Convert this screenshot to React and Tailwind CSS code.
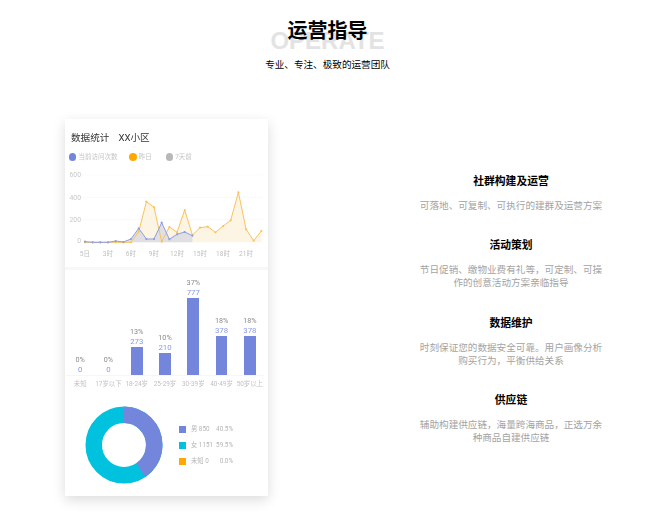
const cjk = "font-['Noto_Sans_CJK_SC','Noto_Sans',sans-serif]";
const chartFont = "font-['Roboto','Noto_Sans_CJK_SC',sans-serif]";

const orangeZ = [382,382,382,382,382,382,382,350,260,277,380,336,352,285,360,338,335,352,333,316,232,343,377,348];
const blueZ = [380,382,382,382,378,381,372,340,372,372,323,373,358,351,362];
const px = (i) => 20 + 7.67 * i;
const py = (z) => z / 3 + 115 - 168;
const line = (arr) => arr.map((z, i) => `${px(i).toFixed(1)},${py(z).toFixed(1)}`).join(' ');
const area = (arr) => `${line(arr)} ${px(arr.length - 1).toFixed(1)},${py(382).toFixed(1)} ${px(0).toFixed(1)},${py(382).toFixed(1)}`;

function LineChart() {
  const yLabels = [['600', 180], ['400', 247], ['200', 314], ['0', 377]];
  const xLabels = [['5日', 0], ['3时', 3], ['6时', 6], ['9时', 9], ['12时', 12], ['15时', 15], ['18时', 18], ['21时', 21]];
  return (
    <svg width="203" height="94" viewBox="0 0 203 94" className="block">
      {[180, 247, 314].map((z) => (
        <line key={z} x1="16" x2="198" y1={py(z)} y2={py(z)} stroke="#f8f8f8" strokeWidth="0.7" />
      ))}
      <polygon points={area(orangeZ)} fill="#fdf5e3" />
      <polygon points={area(blueZ)} fill="#e0e0e2" />
      <polyline points={line(orangeZ)} fill="none" stroke="#fbc25c" strokeWidth="1" />
      <polyline points={line(blueZ)} fill="none" stroke="#8f9de2" strokeWidth="1" />
      {orangeZ.map((z, i) => <circle key={i} cx={px(i)} cy={py(z)} r="1.1" fill="#fbc25c" />)}
      {blueZ.map((z, i) => <circle key={i} cx={px(i)} cy={py(z)} r="1.1" fill="#8f9de2" />)}
      {yLabels.map(([t, z]) => (
        <text key={t} x="16" y={py(z) + 2.4} textAnchor="end" fontSize="6.8" fill="#c8c8c8">{t}</text>
      ))}
      {xLabels.map(([t, i]) => (
        <text key={t} x={px(i)} y="87.5" textAnchor="middle" fontSize="6.6" fill="#c0c0c0">{t}</text>
      ))}
    </svg>
  );
}

const bars = [
  { l: '未知', v: 0, p: '0%', h: 0 },
  { l: '17岁以下', v: 0, p: '0%', h: 0 },
  { l: '18-24岁', v: 273, p: '13%', h: 27.7 },
  { l: '25-29岁', v: 210, p: '10%', h: 22.3 },
  { l: '30-39岁', v: 777, p: '37%', h: 76.7 },
  { l: '40-49岁', v: 378, p: '18%', h: 38.7 },
  { l: '50岁以上', v: 378, p: '18%', h: 38.7 },
];

function Bars() {
  return (
    <div className="ml-px w-[198px]">
      <div className="flex items-end h-[104px] border-b border-[#f6f6f6]">
        {bars.map((b) => (
          <div key={b.l} className="flex-1 flex flex-col items-center">
            <div className="text-[7.2px] leading-[10px] text-[#8a8a8a]">{b.p}</div>
            <div className="text-[7.8px] leading-[10px] text-[#8a9ae6]">{b.v}</div>
            <div className="w-[11.7px] bg-[#7486dc]" style={{ height: b.h }} />
          </div>
        ))}
      </div>
      <div className="flex mt-[3px]">
        {bars.map((b) => (
          <div key={b.l} className="flex-1 text-center whitespace-nowrap text-[6.4px] leading-[10px] text-[#c0c0c0]">{b.l}</div>
        ))}
      </div>
    </div>
  );
}

function Donut() {
  const r = 30.25;
  const c = 2 * Math.PI * r;
  return (
    <svg width="78" height="78" viewBox="0 0 78 78" className="block">
      <circle cx="39" cy="39" r={r} fill="none" stroke="#00c1de" strokeWidth="16.5" />
      <circle
        cx="39" cy="39" r={r} fill="none" stroke="#7486dc" strokeWidth="16.5"
        strokeDasharray={`${0.405 * c} ${c}`} transform="rotate(-90 39 39)"
      />
    </svg>
  );
}

const legend = [
  ['bg-[#7486dc]', '男 850', '40.5%'],
  ['bg-[#00c1de]', '女 1151', '59.5%'],
  ['bg-[#ffa800]', '未知 0', '0.0%'],
];

const features = [
  ['社群构建及运营', ['可落地、可复制、可执行的建群及运营方案']],
  ['活动策划', ['节日促销、缴物业费有礼等，可定制、可操', '作的创意活动方案亲临指导']],
  ['数据维护', ['时刻保证您的数据安全可靠。用户画像分析', '购买行为，平衡供给关系']],
  ['供应链', ['辅助构建供应链，海量跨海商品，正选万余', '种商品自建供应链']],
];

export default function App() {
  return (
    <div className={`w-[664px] h-[523px] bg-white overflow-hidden ${cjk}`}>
      <header className="relative w-[655px] flex flex-col items-center pt-[15px]">
        <div className="absolute top-[27px] left-0 right-0 text-center font-['Liberation_Sans',sans-serif] font-bold text-[24px] leading-[28px] text-[#e3e3e3]">OPERATE</div>
        <h1 className="relative text-[20px] leading-[30px] font-bold text-black">运营指导</h1>
        <p className="relative mt-[12px] text-[9.6px] leading-[14px] text-black">专业、专注、极致的运营团队</p>
      </header>
      <main className="flex items-start mt-[48px] pl-[65px]">
        <section className={`w-[203px] h-[377px] bg-white shadow-[0_4px_12px_rgba(0,0,0,0.14)] blur-[0.3px] ${chartFont}`}>
          <div className="h-[148px] border-b-[3px] border-[#f7f7f7] box-content">
            <div className="flex gap-[9px] pl-[6px] pt-[12px] text-[9.6px] leading-[14px] text-[#333]">
              <span>数据统计</span>
              <span>XX小区</span>
            </div>
            <div className="flex items-center pl-[4px] mt-[8px] text-[6.5px] leading-[8px] text-[#c4c4c4]">
              <span className="w-[7.4px] h-[7.4px] rounded-full bg-[#7486dc]" />
              <span className="ml-[2px] w-[51px]">当前访问次数</span>
              <span className="w-[7.4px] h-[7.4px] rounded-full bg-[#ffa800]" />
              <span className="ml-[2px] w-[27px]">昨日</span>
              <span className="w-[7.4px] h-[7.4px] rounded-full bg-[#b8b8b8]" />
              <span className="ml-[2px]">7天前</span>
            </div>
            <div className="mt-[7px]"><LineChart /></div>
          </div>
          <div className="pt-[2px]"><Bars /></div>
          <div className="flex items-center mt-[17px] pl-[20px]">
            <Donut />
            <div className="ml-[16px] mt-[1px] flex flex-col gap-[7px] text-[6.3px] leading-[9px] text-[#b4b4b4]">
              {legend.map(([c, a, b]) => (
                <div key={a} className="flex items-center">
                  <span className={`w-[7px] h-[7px] ${c}`} />
                  <span className="ml-[5px] w-[24px] whitespace-nowrap">{a}</span>
                  <span className="w-[18px] text-right">{b}</span>
                </div>
              ))}
            </div>
          </div>
        </section>
        <section className="ml-[143px] w-[200px] pt-[53px] flex flex-col gap-[24px]">
          {features.map(([t, lines]) => (
            <div key={t} className="text-center">
              <h3 className="text-[10.8px] leading-[16px] font-bold text-black">{t}</h3>
              <div className="mt-[11px] text-[9.6px] leading-[13.2px] text-[#a3a3a3]">
                {lines.map((l) => <p key={l}>{l}</p>)}
              </div>
            </div>
          ))}
        </section>
      </main>
    </div>
  );
}
